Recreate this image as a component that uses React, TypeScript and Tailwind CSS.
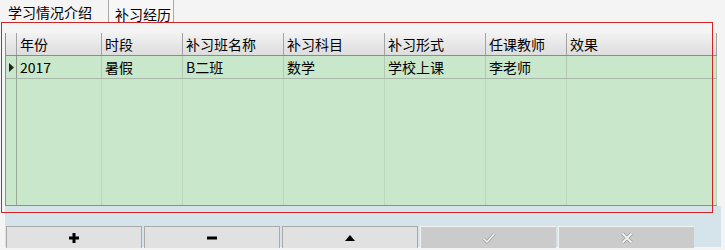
import React from "react";

const columns = [
  { title: "年份", w: "w-[85px]" },
  { title: "时段", w: "w-[81px]" },
  { title: "补习班名称", w: "w-[101px]" },
  { title: "补习科目", w: "w-[101px]" },
  { title: "补习形式", w: "w-[101px]" },
  { title: "任课教师", w: "w-[81px]" },
  { title: "效果", w: "w-[150px]" },
];

const row = ["2017", "暑假", "B二班", "数学", "学校上课", "李老师", ""];

const PlusIcon = () => (
  <svg width="10" height="10" viewBox="0 0 10 10">
    <path d="M3.5 0h3v3.5H10v3H6.5V10h-3V6.5H0v-3h3.5z" fill="#000" />
  </svg>
);

const MinusIcon = () => (
  <svg width="10" height="4" viewBox="0 0 10 4">
    <rect x="0" y="0.5" width="10" height="3" fill="#000" />
  </svg>
);

const UpIcon = () => (
  <svg width="10" height="6" viewBox="0 0 10 6">
    <path d="M5 0L10 6H0z" fill="#000" />
  </svg>
);

const CheckIcon = () => (
  <svg width="14" height="12" viewBox="0 0 14 12">
    <path d="M1.5 6.5l3.5 3.5 7.5-8.5" fill="none" stroke="#9a9a9a" strokeWidth="3" strokeLinejoin="round" />
    <path d="M1.5 6.5l3.5 3.5 7.5-8.5" fill="none" stroke="#f4f4f4" strokeWidth="1.6" strokeLinejoin="round" />
  </svg>
);

const CrossIcon = () => (
  <svg width="12" height="12" viewBox="0 0 12 12">
    <path d="M1.5 1.5l9 9M10.5 1.5l-9 9" fill="none" stroke="#9a9a9a" strokeWidth="3.4" />
    <path d="M1.5 1.5l9 9M10.5 1.5l-9 9" fill="none" stroke="#f4f4f4" strokeWidth="1.8" />
  </svg>
);

const ToolButton = ({ children, disabled }: { children: React.ReactNode; disabled?: boolean }) => (
  <button
    className={
      disabled
        ? "w-[136px] h-[22px] flex items-center justify-center bg-[#cbcbcb] border-l border-t border-[#f2f2f2]"
        : "w-[136px] h-[22px] flex items-center justify-center bg-[#e1e1e1] border border-b-0 border-[#a9a9a9]"
    }
  >
    {children}
  </button>
);

export default function App() {
  return (
    <div
      className="relative w-[725px] h-[250px] bg-[#f4f4f4] text-[14px] text-black overflow-hidden"
      style={{ fontFamily: '"Noto Sans CJK SC", "Noto Sans", sans-serif' }}
    >
      {/* tabs */}
      <div className="h-[23px] flex items-start">
        <div className="pl-[8px] pt-[4px] leading-[16px] w-[108px]">学习情况介绍</div>
        <div className="h-[23px] w-[66px] border-x border-[#a8a8a8] bg-[#f7f7f7] pl-[6px] pt-[6px] leading-[16px]">
          补习经历
        </div>
      </div>

      {/* grid */}
      <div className="pt-[10px] pl-[5px]">
        <div className="w-[712px] h-[173px] flex flex-col bg-[#c9e7ca] border-l border-b border-[#8a8e90]">
          <div className="h-[23px] flex bg-gradient-to-b from-[#f2f2f2] to-[#dddddd] border-b border-[#8c8c8c]">
            <div className="w-[11px] border-r border-[#a3a3a3]" />
            {columns.map((c) => (
              <div key={c.title} className={`${c.w} border-r border-[#a3a3a3] pl-[3px] leading-[22px]`}>
                {c.title}
              </div>
            ))}
          </div>
          <div className="h-[23px] flex border-b border-[#a9b9a9]">
            <div className="w-[11px] border-r border-[#8f9a8f] flex items-center pl-[3px]">
              <svg width="5" height="9" viewBox="0 0 5 9">
                <path d="M0 0L5 4.5L0 9z" fill="#222" />
              </svg>
            </div>
            {columns.map((c, i) => (
              <div key={c.title} className={`${c.w} border-r border-[#b3c7b3] pl-[3px] leading-[22px]`}>
                {row[i]}
              </div>
            ))}
          </div>
          <div className="flex-1 flex">
            <div className="w-[11px] border-r border-[#9aa89a]" />
            {columns.map((c) => (
              <div key={c.title} className={`${c.w} border-r border-[#bcd6bc]`} />
            ))}
          </div>
        </div>

        {/* toolbar */}
        <div className="w-[716px] h-[41px] bg-[#d5e3eb] pt-[20px] pl-[1px] flex gap-[2px]">
          <ToolButton>
            <PlusIcon />
          </ToolButton>
          <ToolButton>
            <MinusIcon />
          </ToolButton>
          <ToolButton>
            <UpIcon />
          </ToolButton>
          <ToolButton disabled>
            <CheckIcon />
          </ToolButton>
          <ToolButton disabled>
            <CrossIcon />
          </ToolButton>
        </div>
      </div>

      {/* red highlight */}
      <div className="absolute left-[1px] top-[22px] w-[712px] h-[191px] border border-[#d02424] pointer-events-none" />
    </div>
  );
}
